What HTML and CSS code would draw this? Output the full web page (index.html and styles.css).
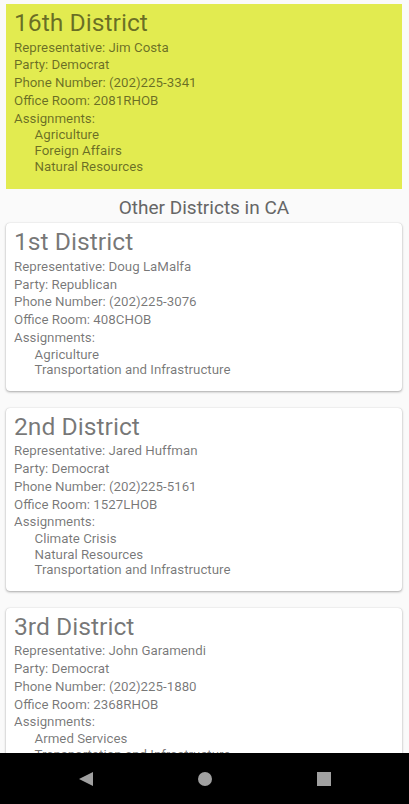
FILE: index.html
```html
<!DOCTYPE html>
<html lang="en">
<head>
<meta charset="utf-8">
<title>Districts</title>
<link rel="stylesheet" href="styles.css">
</head>
<body>
<div class="screen">
  <main class="content">
    <section class="card card-home">
      <h1 class="title">16th District</h1>
      <p class="line">Representative: Jim Costa</p>
      <p class="line">Party: Democrat</p>
      <p class="line">Phone Number: (202)225-3341</p>
      <p class="line">Office Room: 2081RHOB</p>
      <p class="line">Assignments:</p>
      <ul class="assign">
        <li>Agriculture</li>
        <li>Foreign Affairs</li>
        <li>Natural Resources</li>
      </ul>
    </section>

    <h2 class="section-title">Other Districts in CA</h2>

    <section class="card card-other">
      <h1 class="title">1st District</h1>
      <p class="line">Representative: Doug LaMalfa</p>
      <p class="line">Party: Republican</p>
      <p class="line">Phone Number: (202)225-3076</p>
      <p class="line">Office Room: 408CHOB</p>
      <p class="line">Assignments:</p>
      <ul class="assign">
        <li>Agriculture</li>
        <li>Transportation and Infrastructure</li>
      </ul>
    </section>

    <section class="card card-other">
      <h1 class="title">2nd District</h1>
      <p class="line">Representative: Jared Huffman</p>
      <p class="line">Party: Democrat</p>
      <p class="line">Phone Number: (202)225-5161</p>
      <p class="line">Office Room: 1527LHOB</p>
      <p class="line">Assignments:</p>
      <ul class="assign">
        <li>Climate Crisis</li>
        <li>Natural Resources</li>
        <li>Transportation and Infrastructure</li>
      </ul>
    </section>

    <section class="card card-other">
      <h1 class="title">3rd District</h1>
      <p class="line">Representative: John Garamendi</p>
      <p class="line">Party: Democrat</p>
      <p class="line">Phone Number: (202)225-1880</p>
      <p class="line">Office Room: 2368RHOB</p>
      <p class="line">Assignments:</p>
      <ul class="assign">
        <li>Armed Services</li>
        <li>Transportation and Infrastructure</li>
      </ul>
    </section>
  </main>

  <nav class="navbar">
    <span class="nav-btn">
      <svg width="16" height="16" viewBox="0 0 16 16"><polygon points="15,1 15,15 1,8" fill="#a0a0a0"/></svg>
    </span>
    <span class="nav-btn">
      <svg width="16" height="16" viewBox="0 0 16 16"><circle cx="8" cy="8" r="7" fill="#a0a0a0"/></svg>
    </span>
    <span class="nav-btn">
      <svg width="16" height="16" viewBox="0 0 16 16"><rect x="1" y="1" width="14" height="14" fill="#a0a0a0"/></svg>
    </span>
  </nav>
</div>
</body>
</html>
```

FILE: styles.css
```css
html, body {
  margin: 0;
  padding: 0;
  background: #fafafa;
}

body {
  font-family: Roboto, "Liberation Sans", sans-serif;
  color: rgba(0, 0, 0, 0.54);
  overflow: hidden;
}

.screen {
  width: 409px;
  height: 804px;
  display: flex;
  flex-direction: column;
}

.content {
  flex: 1;
  overflow: hidden;
  padding: 4px 7px 0 6px;
  display: flex;
  flex-direction: column;
}

.card {
  flex: none;
  padding: 4px 8px 14.7px 8px;
}

.card-home {
  background: #e2eb50;
}

.card-other {
  background: #ffffff;
  border-radius: 4px;
  box-shadow: 0 1px 2.5px rgba(0, 0, 0, 0.32), 0 0 1px rgba(0, 0, 0, 0.18);
  padding-bottom: 13.2px;
  margin-bottom: 16.5px;
}

.title {
  margin: 0 0 1.5px 0;
  font-size: 24.7px;
  font-weight: 400;
  line-height: normal;
}

.line {
  margin: 0;
  font-size: 13.3px;
  line-height: 17.8px;
}

.assign {
  list-style: none;
  margin: 0;
  padding: 0 0 0 20.5px;
  font-size: 13.3px;
  line-height: 15.6px;
}

.section-title {
  margin: 7.4px 0 4px 0;
  font-size: 19px;
  font-weight: 400;
  line-height: normal;
  text-align: center;
  color: #666666;
}

.navbar {
  flex: none;
  height: 51px;
  background: #000000;
  display: grid;
  grid-template-columns: repeat(3, 119px);
  justify-content: center;
  align-items: center;
}

.nav-btn {
  display: flex;
  justify-content: center;
  align-items: center;
}

.nav-btn svg {
  display: block;
}
```
